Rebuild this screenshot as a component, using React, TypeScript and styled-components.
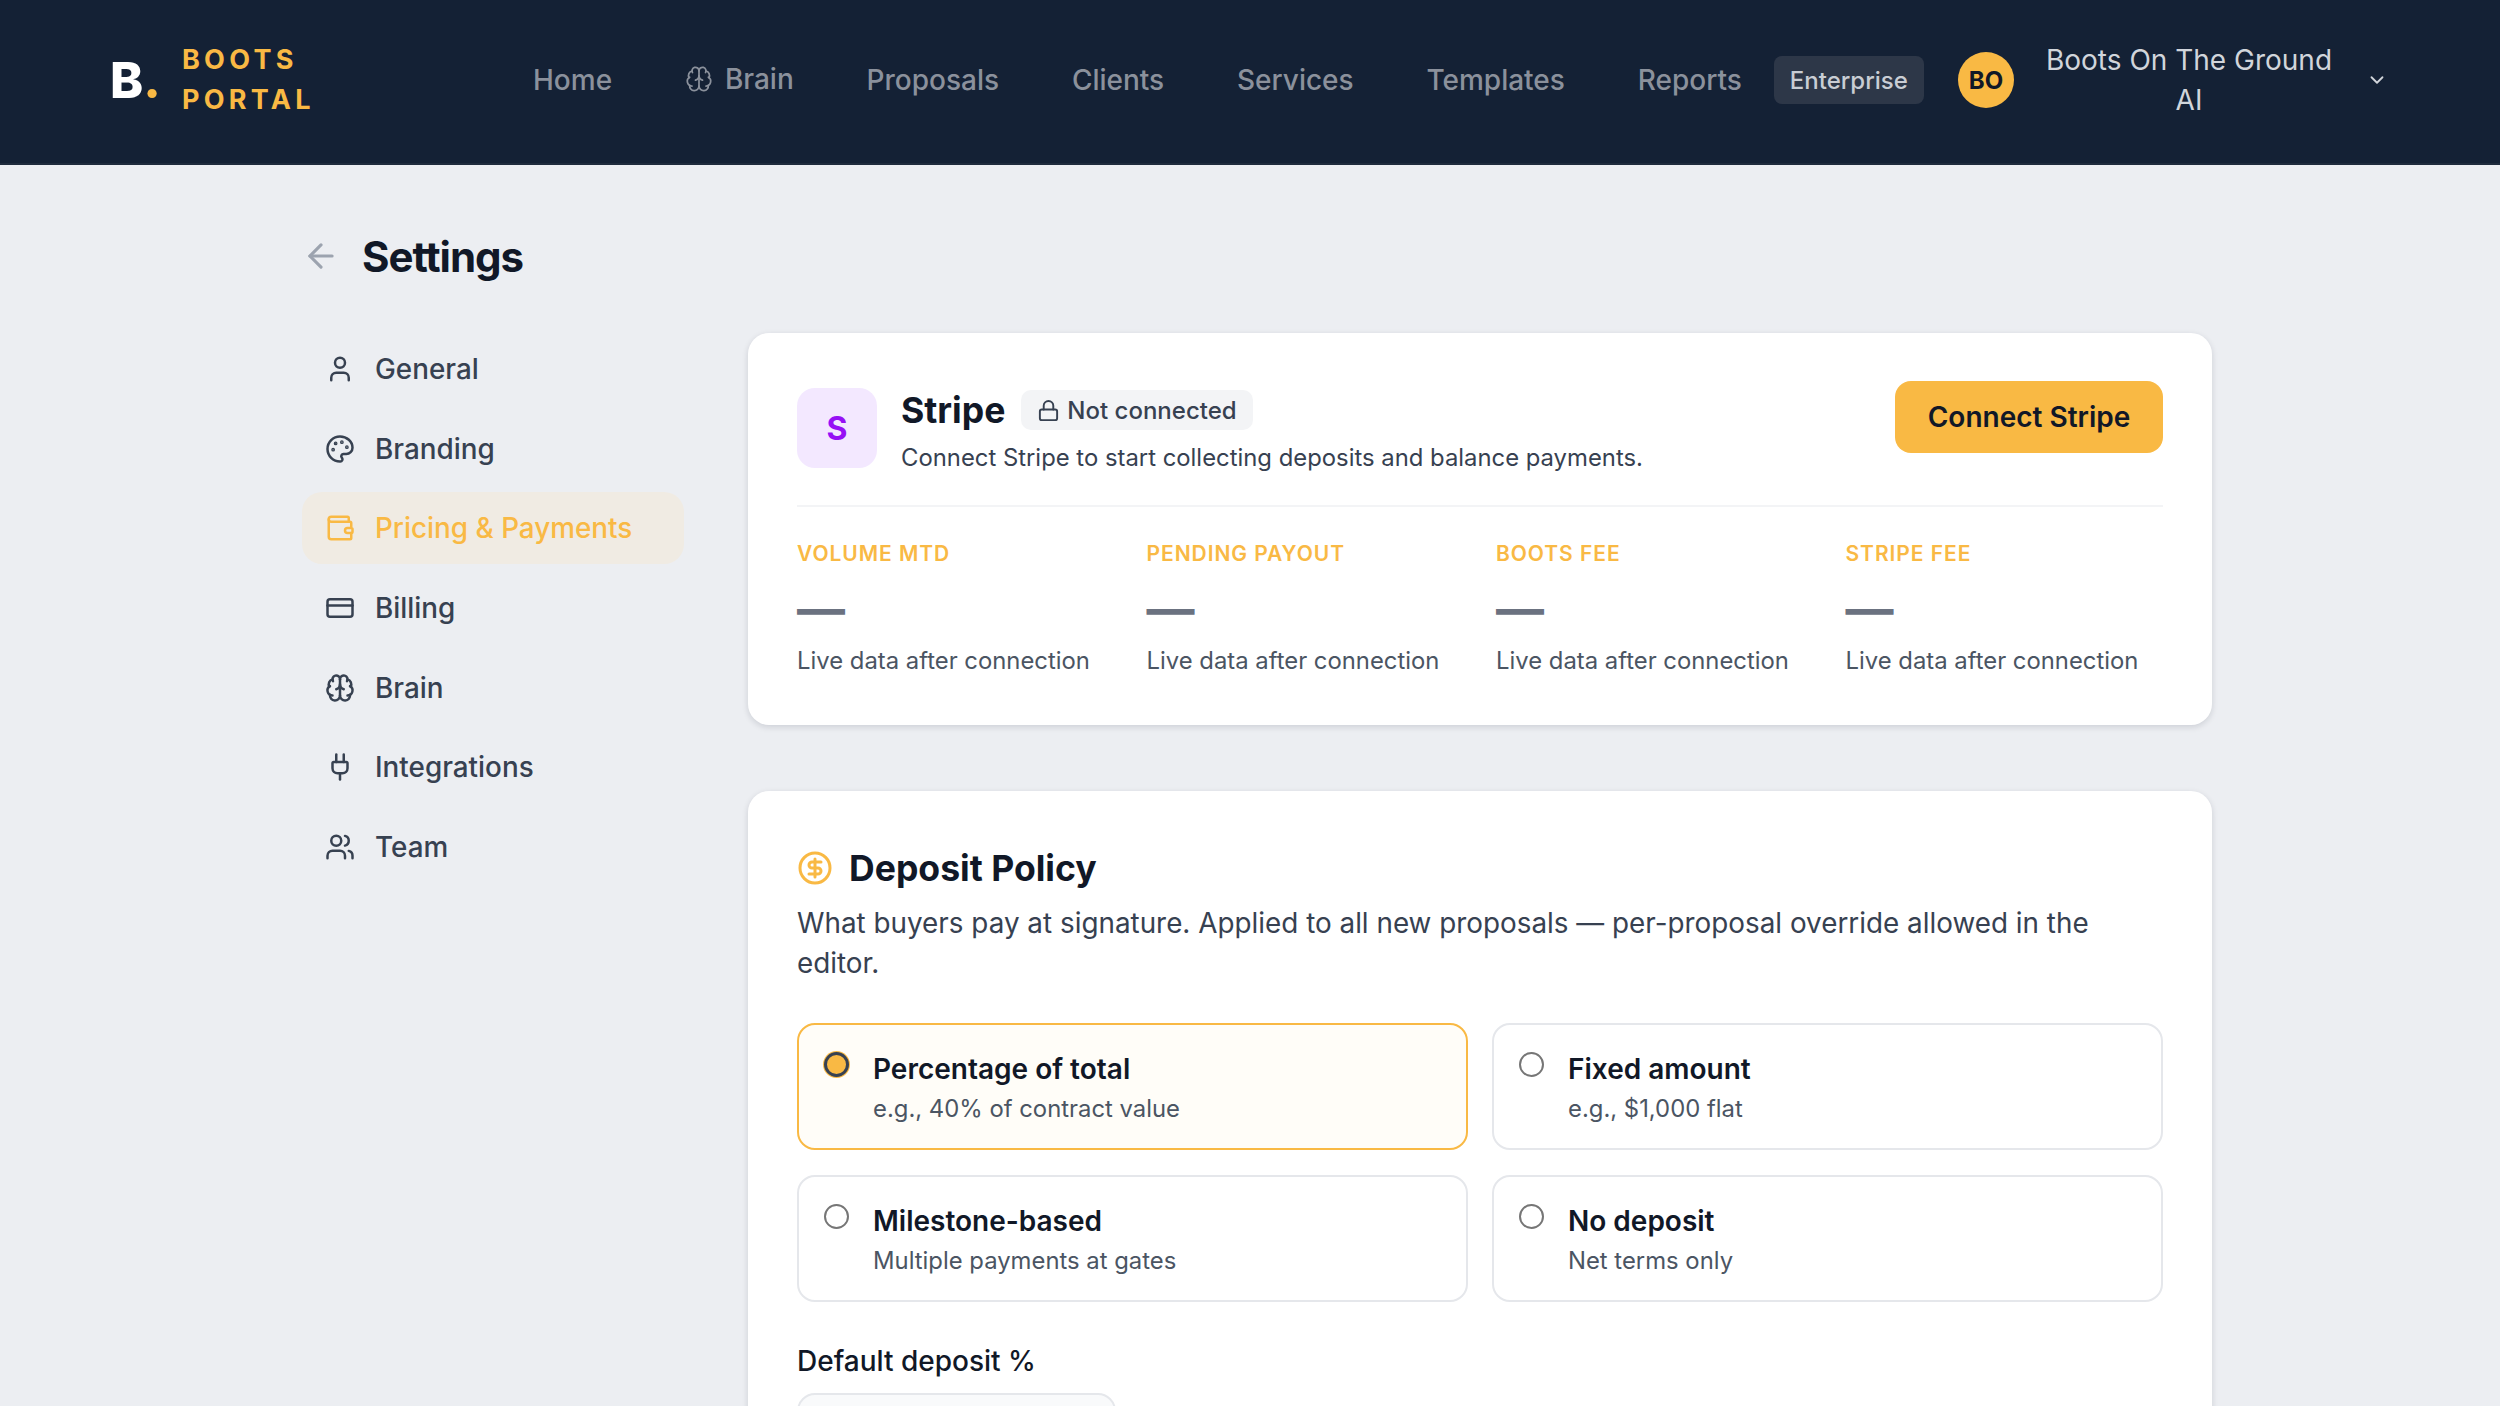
import React from 'react';
import styled, { createGlobalStyle } from 'styled-components';
import {
  ArrowLeft,
  Brain,
  ChevronDown,
  CircleDollarSign,
  CreditCard,
  Lock,
  Palette,
  Plug,
  User,
  Users,
  Wallet,
} from 'lucide-react';

const amber = '#f9b944';
const ink = '#111827';

const GlobalStyle = createGlobalStyle`
  html, body {
    margin: 0;
    height: 100%;
    overflow: hidden;
    background: #eceef2;
    font-family: Inter, "Noto Sans", sans-serif;
    color: ${ink};
  }
  * { box-sizing: border-box; }
`;

const Header = styled.header`
  height: 165px;
  background: #142135;
  border-bottom: 2px solid #1f2b3d;
  padding: 0 112px 3px 110px;
  display: flex;
  align-items: center;
`;

const Logo = styled.div`
  width: 423px;
  display: flex;
  align-items: center;
  gap: 21px;
`;

const LogoMark = styled.span`
  font-size: 50px;
  font-weight: 800;
  line-height: 1;
  color: #fff;

  & > i {
    font-style: normal;
    color: ${amber};
  }
`;

const LogoText = styled.div`
  font-size: 27px;
  font-weight: 700;
  line-height: 40px;
  letter-spacing: 0.16em;
  color: ${amber};
`;

const Nav = styled.nav`
  display: flex;
  align-items: center;
  gap: 72.8px;
`;

const NavLink = styled.a<{ $raised?: boolean }>`
  display: flex;
  align-items: center;
  gap: 12px;
  font-size: 28px;
  font-weight: 500;
  line-height: 40px;
  color: #8b919c;
  margin-bottom: ${({ $raised }) => ($raised ? '3px' : '0')};
`;

const PlanBadge = styled.span`
  margin-left: 32px;
  height: 48px;
  padding: 0 16px;
  display: flex;
  align-items: center;
  border-radius: 8px;
  background: #2d3748;
  color: #c9cdd4;
  font-size: 24px;
  font-weight: 500;
`;

const Account = styled.div`
  margin-left: auto;
  display: flex;
  align-items: center;
`;

const Avatar = styled.span`
  width: 56px;
  height: 56px;
  border-radius: 50%;
  background: ${amber};
  color: ${ink};
  display: flex;
  align-items: center;
  justify-content: center;
  font-size: 24px;
  font-weight: 700;
`;

const AccountName = styled.span`
  width: 310px;
  margin-left: 20px;
  text-align: center;
  font-size: 28px;
  line-height: 40px;
  color: #d1d5db;
`;

const AccountCaret = styled(ChevronDown)`
  margin-left: 22px;
  color: #d1d5db;
`;

const Page = styled.div`
  padding: 63px 288px 0 302px;
`;

const TitleRow = styled.div`
  height: 56px;
  margin-bottom: 49px;
  display: flex;
  align-items: center;
  gap: 22px;
  color: #9ca3af;
`;

const PageTitle = styled.h1`
  margin: 0;
  font-size: 42px;
  font-weight: 700;
  letter-spacing: -0.025em;
  color: ${ink};
`;

const Columns = styled.div`
  display: grid;
  grid-template-columns: 382px 1fr;
  gap: 64px;
  align-items: start;
`;

const SideNav = styled.nav`
  display: flex;
  flex-direction: column;
  gap: 7.7px;
`;

const SideItem = styled.a<{ $active?: boolean }>`
  height: 72px;
  padding: 0 23px;
  display: flex;
  align-items: center;
  gap: 20px;
  border-radius: 20px;
  font-size: 27.85px;
  font-weight: 500;
  color: ${({ $active }) => ($active ? amber : '#374151')};
  background: ${({ $active }) => ($active ? '#f0ebe3' : 'transparent')};
`;

const Card = styled.section`
  background: #fff;
  border-radius: 21px;
  padding: 48px 49px 46px;
  margin-bottom: 65.5px;
  box-shadow: 0 2px 6px rgba(17, 24, 39, 0.14);
`;

const StripeHead = styled.div`
  display: flex;
  justify-content: space-between;
  align-items: flex-start;
  padding-bottom: 31px;
  border-bottom: 2px solid #f3f4f6;
`;

const StripeInfo = styled.div`
  margin-top: 7px;
  display: flex;
  gap: 24px;
`;

const StripeTile = styled.span`
  width: 80px;
  height: 80px;
  border-radius: 18px;
  background: #f3e8ff;
  color: #9610f5;
  display: flex;
  align-items: center;
  justify-content: center;
  font-size: 32px;
  font-weight: 700;
`;

const StripeTitleRow = styled.div`
  display: flex;
  align-items: center;
  gap: 16px;
  height: 44px;
`;

const StripeName = styled.h2`
  margin: 0;
  font-size: 35.6px;
  font-weight: 700;
  color: ${ink};
`;

const StatusPill = styled.span`
  height: 40px;
  padding: 0 16px;
  display: flex;
  align-items: center;
  gap: 7px;
  border-radius: 10px;
  background: #f3f4f6;
  color: #374151;
  font-size: 24px;
  font-weight: 500;
`;

const StripeNote = styled.p`
  margin: 10px 0 0;
  font-size: 23.85px;
  line-height: 32px;
  color: #374151;
`;

const ConnectButton = styled.button`
  width: 268px;
  height: 72px;
  border: 0;
  border-radius: 16px;
  background: ${amber};
  color: ${ink};
  font-family: inherit;
  font-size: 28px;
  font-weight: 600;
`;

const Stats = styled.div`
  margin-top: 33px;
  display: grid;
  grid-template-columns: repeat(4, 1fr);
  gap: 32px;
`;

const StatLabel = styled.div`
  font-size: 21px;
  line-height: 28px;
  font-weight: 600;
  letter-spacing: 0.045em;
  color: ${amber};
`;

const StatValue = styled.div`
  margin-top: 13px;
  font-size: 48px;
  line-height: 56px;
  font-weight: 700;
  color: #6b7280;
`;

const StatNote = styled.div`
  margin-top: 6px;
  font-size: 23.85px;
  line-height: 36px;
  color: #4b5563;
`;

const SectionTitle = styled.div`
  height: 56px;
  margin-top: 1.5px;
  display: flex;
  align-items: center;
  gap: 16px;
  color: ${amber};
`;

const SectionName = styled.h2`
  margin: 0;
  font-size: 35.6px;
  font-weight: 700;
  color: ${ink};
`;

const SectionNote = styled.p`
  margin: 7px 0 0;
  font-size: 27.85px;
  line-height: 40px;
  color: #374151;
`;

const OptionGrid = styled.div`
  margin-top: 40px;
  display: grid;
  grid-template-columns: 1fr 1fr;
  gap: 25px 24px;
`;

const Option = styled.label<{ $selected?: boolean }>`
  height: 127px;
  padding: 24px 25px;
  display: flex;
  gap: 24px;
  border-radius: 18px;
  border: 2px solid ${({ $selected }) => ($selected ? amber : '#e5e7eb')};
  background: ${({ $selected }) => ($selected ? '#fffdf8' : '#fff')};
`;

const Radio = styled.span<{ $selected?: boolean }>`
  flex: none;
  width: 25px;
  height: 25px;
  margin-top: 3px;
  border-radius: 50%;
  border: ${({ $selected }) => ($selected ? '3px solid #374151' : '2px solid #767676')};
  background: ${({ $selected }) => ($selected ? amber : '#fff')};
  box-shadow: ${({ $selected }) => ($selected ? `0 0 0 1px ${amber}` : 'none')};
`;

const OptionName = styled.div`
  font-size: 28px;
  line-height: 40px;
  font-weight: 600;
  color: ${ink};
`;

const OptionNote = styled.div`
  margin-top: 2px;
  font-size: 23.85px;
  line-height: 36px;
  color: #4b5563;
`;

const FieldLabel = styled.div`
  margin-top: 39px;
  font-size: 28px;
  line-height: 40px;
  font-weight: 500;
  color: ${ink};
`;

const FieldInput = styled.div`
  margin-top: 12px;
  width: 319px;
  height: 72px;
  border-radius: 18px;
  border: 2px solid #e5e7eb;
  background: #f9fafb;
`;

const sideItems = [
  { label: 'General', icon: User },
  { label: 'Branding', icon: Palette },
  { label: 'Pricing & Payments', icon: Wallet, active: true },
  { label: 'Billing', icon: CreditCard },
  { label: 'Brain', icon: Brain },
  { label: 'Integrations', icon: Plug },
  { label: 'Team', icon: Users },
];

const stats = ['VOLUME MTD', 'PENDING PAYOUT', 'BOOTS FEE', 'STRIPE FEE'];

const options = [
  { name: 'Percentage of total', note: 'e.g., 40% of contract value', selected: true },
  { name: 'Fixed amount', note: 'e.g., $1,000 flat' },
  { name: 'Milestone-based', note: 'Multiple payments at gates' },
  { name: 'No deposit', note: 'Net terms only' },
];

const App: React.FC = () => (
  <>
    <GlobalStyle />
    <Header>
      <Logo>
        <LogoMark>
          B<i>.</i>
        </LogoMark>
        <LogoText>
          BOOTS
          <br />
          PORTAL
        </LogoText>
      </Logo>
      <Nav>
        <NavLink>Home</NavLink>
        <NavLink $raised>
          <Brain size={28} strokeWidth={1.5} />
          Brain
        </NavLink>
        <NavLink>Proposals</NavLink>
        <NavLink>Clients</NavLink>
        <NavLink>Services</NavLink>
        <NavLink>Templates</NavLink>
        <NavLink>Reports</NavLink>
      </Nav>
      <PlanBadge>Enterprise</PlanBadge>
      <Account>
        <Avatar>BO</Avatar>
        <AccountName>Boots On The Ground AI</AccountName>
        <AccountCaret size={22} />
      </Account>
    </Header>
    <Page>
      <TitleRow>
        <ArrowLeft size={38} />
        <PageTitle>Settings</PageTitle>
      </TitleRow>
      <Columns>
        <SideNav>
          {sideItems.map(({ label, icon: Icon, active }) => (
            <SideItem key={label} $active={active}>
              <Icon size={30} />
              {label}
            </SideItem>
          ))}
        </SideNav>
        <div>
          <Card>
            <StripeHead>
              <StripeInfo>
                <StripeTile>S</StripeTile>
                <div>
                  <StripeTitleRow>
                    <StripeName>Stripe</StripeName>
                    <StatusPill>
                      <Lock size={23} />
                      Not connected
                    </StatusPill>
                  </StripeTitleRow>
                  <StripeNote>Connect Stripe to start collecting deposits and balance payments.</StripeNote>
                </div>
              </StripeInfo>
              <ConnectButton>Connect Stripe</ConnectButton>
            </StripeHead>
            <Stats>
              {stats.map((label) => (
                <div key={label}>
                  <StatLabel>{label}</StatLabel>
                  <StatValue>—</StatValue>
                  <StatNote>Live data after connection</StatNote>
                </div>
              ))}
            </Stats>
          </Card>
          <Card>
            <SectionTitle>
              <CircleDollarSign size={36} />
              <SectionName>Deposit Policy</SectionName>
            </SectionTitle>
            <SectionNote>
              What buyers pay at signature. Applied to all new proposals — per-proposal override allowed in the editor.
            </SectionNote>
            <OptionGrid>
              {options.map((option) => (
                <Option key={option.name} $selected={option.selected}>
                  <Radio $selected={option.selected} />
                  <div>
                    <OptionName>{option.name}</OptionName>
                    <OptionNote>{option.note}</OptionNote>
                  </div>
                </Option>
              ))}
            </OptionGrid>
            <FieldLabel>Default deposit %</FieldLabel>
            <FieldInput />
          </Card>
        </div>
      </Columns>
    </Page>
  </>
);

export default App;
